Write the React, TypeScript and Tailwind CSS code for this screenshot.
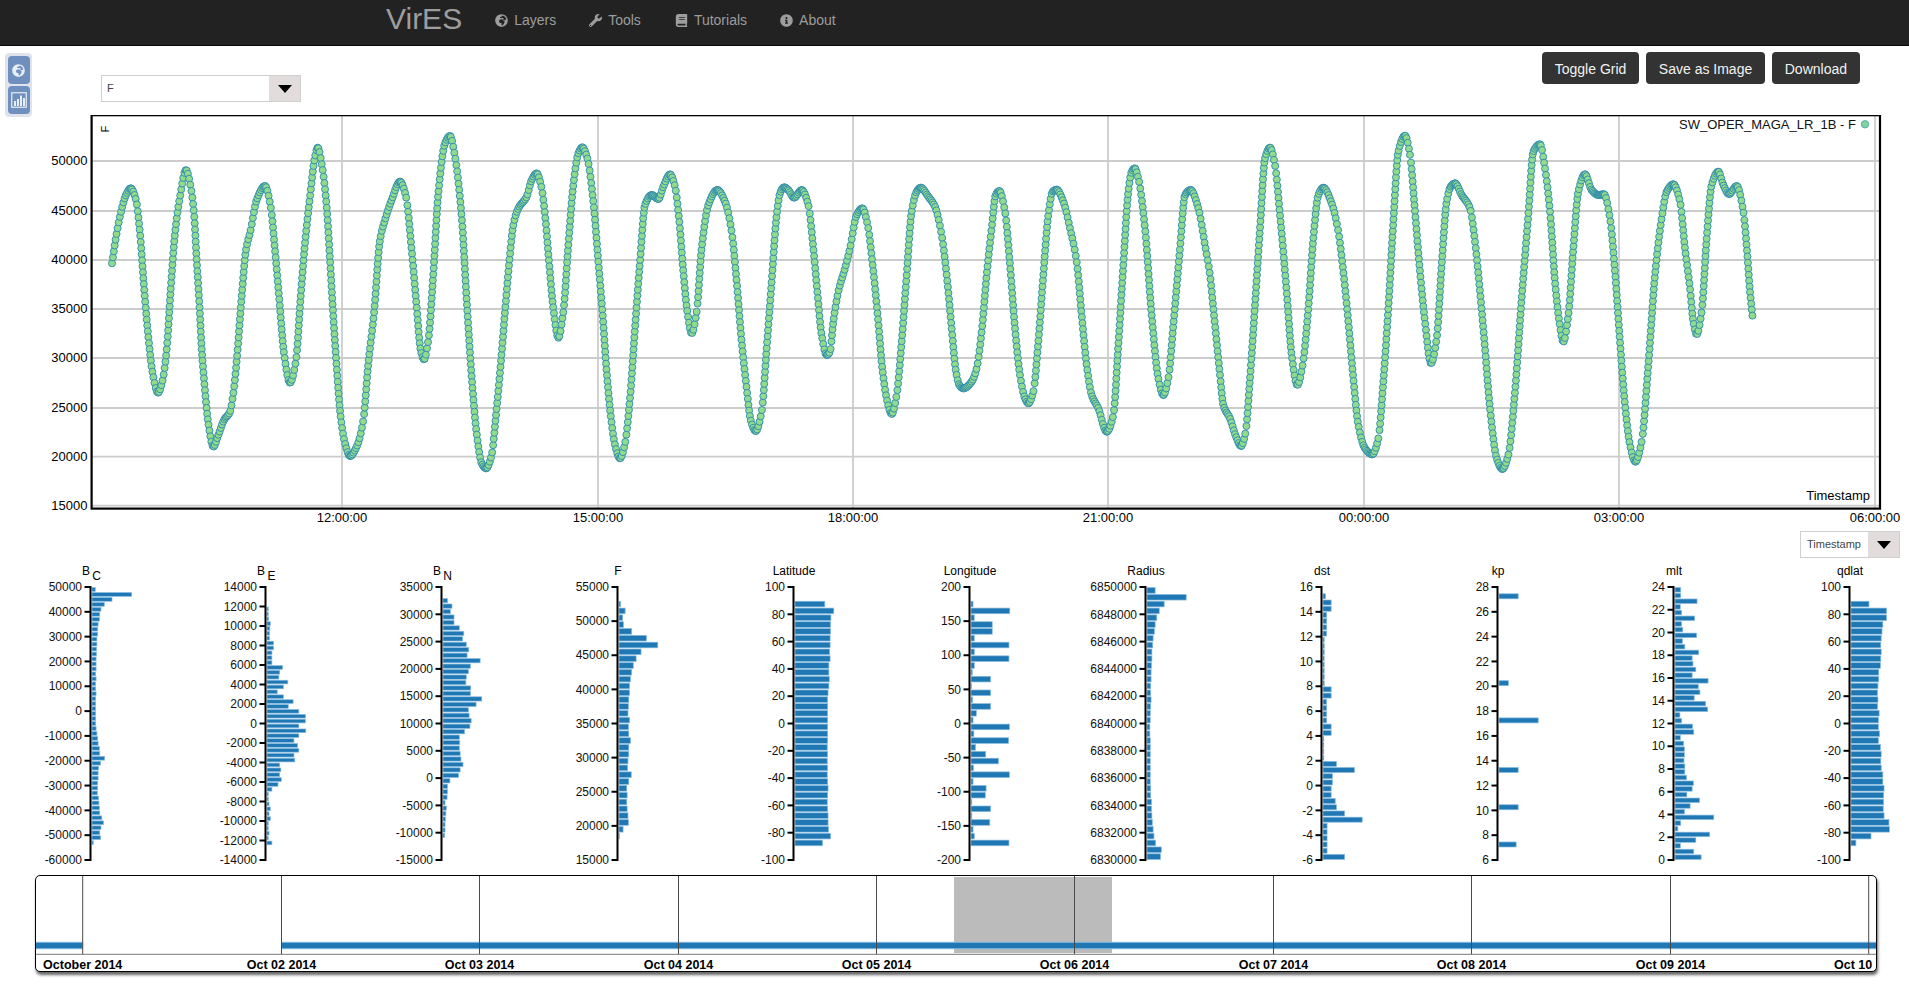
import { FaBook, FaGlobeAfrica, FaInfoCircle, FaWrench } from "react-icons/fa";

const sections: [number, number, number[]][] = [
  [0, 100, [336,490,350,400,362,340,378,285,392,265,408,300,420,400,432,560,445,710,458,820,474,878,488,840,500,750,512,570,525,400,540,290,558,210,572,260,582,340,590,480,598,610,606,760,614,860,625,970,640,1040,655,1005,672,960,690,935,700,880,712,760,725,590,738,450,752,390,770,300,795,258,812,320,825,450,838,600,852,760,870,848,888,780,902,590,915,430,930,290,945,170,953,143,968,210,980,320,990,480,1000,650,1010,800,1022,950,1035,1030,1050,1068,1070,1040,1090,960,1105,790,1122,640,1140,420,1155,360,1175,300,1200,245,1218,290,1235,450,1250,620,1262,750,1272,778,1285,720,1300,520,1315,280,1335,130,1350,108,1365,170,1385,350,1400,600,1415,830,1430,1000,1445,1090]],
  [480, 115, [18,1060,35,1020,48,900,62,750,75,590,88,440,100,330,115,280,140,245,155,195,170,175,185,220,197,320,207,440,220,580,235,668,250,590,265,390,280,210,295,115,307,97,322,130,340,260,355,440,368,600,380,770,392,900,405,990,420,1030,435,985,450,850,465,640,480,440,495,270,515,240,535,252,550,215,570,178,585,215,598,320,610,470,622,590,635,655,650,590,665,400,685,270,712,225,735,260,755,350,770,500,785,680,800,820,812,915,827,948,845,890,860,700,875,500,890,300,900,235,912,217,925,225,942,248,965,225,985,270,1000,400,1012,530,1025,660,1040,720]],
  [830, 115, [0,710,10,620,25,530,45,460,60,400,80,300,97,280,113,330,128,450,143,600,158,770,172,860,185,897,200,840,215,680,230,480,245,290,260,230,272,218,295,245,315,275,335,360,350,480,365,640,378,770,388,810,400,820,425,800,440,760,455,650,470,480,485,340,497,240,508,228,525,290,540,450,555,640,570,780,585,850,595,865,610,830,625,680,640,480,655,300,668,230,680,224,700,260,720,340,740,440,755,600,770,750,785,840,805,880,830,950,850,900,865,690,880,450,895,230,905,170,914,160,925,190,945,340,965,600,985,790,1000,840,1015,790,1030,630,1050,400,1065,240]],
  [1180, 115, [32,225,55,280,75,390,90,480,100,580,110,680,120,780,130,870,150,910,168,965,183,993,197,950,210,790,225,570,240,340,255,130,270,98,285,150,300,300,320,530,335,720,352,810,368,750,385,580,400,370,415,240,430,218,455,265,475,350,490,470,505,620,520,790,535,930,555,1000,577,1018,595,970,610,800,625,580,640,320,655,110,675,62,690,120,705,290,720,470,735,620,753,745,770,670,785,450,800,260,812,215,825,205,845,240,870,280,885,380,900,530,915,700,930,880,950,1030,967,1062,985,1020,1005,830,1025,550,1045,300,1060,110]],
  [1530, 115, [30,88,45,160,60,290,75,500,88,620,100,680,115,600,130,400,145,230,165,178,185,225,205,240,222,238,240,310,255,470,270,680,285,870,300,990,316,1040,335,980,355,750,375,480,395,310,410,230,430,208,450,260,465,400,480,520,490,620,500,658,515,590,530,370,545,210,565,170,580,210,597,237,620,213,640,290,652,420,660,530,668,608]],
];

function buildCurve(): [number, number][] {
  const xs: number[] = [];
  const ys: number[] = [];
  for (const [ox, oy, p] of sections) {
    for (let i = 0; i < p.length; i += 2) {
      xs.push(ox + p[i] / 3);
      ys.push(oy + p[i + 1] / 3);
    }
  }
  const n = xs.length;
  const d: number[] = [];
  for (let i = 0; i < n - 1; i++) d.push((ys[i + 1] - ys[i]) / (xs[i + 1] - xs[i]));
  const m: number[] = new Array(n).fill(0);
  m[0] = d[0];
  m[n - 1] = d[n - 2];
  for (let i = 1; i < n - 1; i++) {
    if (d[i - 1] * d[i] <= 0) m[i] = 0;
    else {
      const h0 = xs[i] - xs[i - 1];
      const h1 = xs[i + 1] - xs[i];
      const w1 = 2 * h1 + h0;
      const w2 = h1 + 2 * h0;
      m[i] = (w1 + w2) / (w1 / d[i - 1] + w2 / d[i]);
    }
  }
  const evaluate = (x: number, k: number) => {
    const h = xs[k + 1] - xs[k];
    const t = (x - xs[k]) / h;
    const t2 = t * t;
    const t3 = t2 * t;
    return (
      (2 * t3 - 3 * t2 + 1) * ys[k] +
      (t3 - 2 * t2 + t) * h * m[k] +
      (-2 * t3 + 3 * t2) * ys[k + 1] +
      (t3 - t2) * h * m[k + 1]
    );
  };
  const out: [number, number][] = [];
  let k = 0;
  let x = xs[0];
  while (x <= xs[n - 1]) {
    while (k < n - 2 && x > xs[k + 1]) k++;
    const y = evaluate(x, k);
    out.push([x, y]);
    const slope = Math.abs((evaluate(x + 0.1, k) - y) / 0.1);
    const arc = Math.min(6, 0.5 + 1.1 * slope);
    x += Math.max(0.3, arc / Math.sqrt(1 + slope * slope));
  }
  return out;
}

const curve = buildCurve();

const FONT = "font-['Liberation_Sans',Arial,sans-serif]";
const gridY = [161, 211, 260, 309, 358, 408, 456.7, 505.7];
const gridLabels = ["50000", "45000", "40000", "35000", "30000", "25000", "20000", "15000"];
const gridX: [number, string][] = [
  [342, "12:00:00"],
  [598, "15:00:00"],
  [853, "18:00:00"],
  [1108, "21:00:00"],
  [1364, "00:00:00"],
  [1619, "03:00:00"],
  [1875, "06:00:00"],
];

function MainChart() {
  return (
    <svg viewBox="0 115 1909 416" className="block w-[1909px] h-[416px]" fontFamily="'Liberation Sans', Arial, sans-serif">
      {gridY.map((y, i) => (
        <g key={y}>
          <line x1={92} x2={1880} y1={y} y2={y} stroke="#cccccc" strokeWidth={1.8} />
          <text x={87.5} y={y + 4.3} textAnchor="end" fontSize={13} fill="#000">
            {gridLabels[i]}
          </text>
        </g>
      ))}
      {gridX.map(([x, label]) => (
        <g key={label}>
          <line x1={x} x2={x} y1={115} y2={508} stroke="#cccccc" strokeWidth={1.8} />
          <text x={x} y={521.5} textAnchor="middle" fontSize={13} fill="#000">
            {label}
          </text>
        </g>
      ))}
      <g fill="#90db8c" stroke="#2c88b0" strokeWidth={0.9}>
        {curve.map(([x, y], i) => (
          <circle key={i} cx={x} cy={y} r={3.5} />
        ))}
      </g>
      <rect x={91.6} y={115.2} width={1788.4} height={393.4} fill="none" stroke="#000" strokeWidth={2.2} />
      <text transform="rotate(-90 109 129)" x={109} y={129} textAnchor="middle" fontSize={11} fill="#000">
        F
      </text>
      <text x={1856} y={129} textAnchor="end" fontSize={13} fill="#111">
        SW_OPER_MAGA_LR_1B - F
      </text>
      <circle cx={1865} cy={124.3} r={3.7} fill="#7fd39b" stroke="#5aaeb0" strokeWidth={1} />
      <text x={1870} y={500} textAnchor="end" fontSize={13} fill="#000">
        Timestamp
      </text>
    </svg>
  );
}

type Hist = {
  title: string;
  sub?: string;
  ticks: number[];
  bins: number;
  first: number;
  w: number[];
};

const range = (a: number, b: number, s: number) => {
  const out: number[] = [];
  for (let v = a; s > 0 ? v <= b : v >= b; v += s) out.push(v);
  return out;
};

const kp = new Array(44).fill(0);
kp[1] = 47;
kp[15] = 23;
kp[21] = 96;
kp[29] = 47;
kp[35] = 47;
kp[41] = 42;

const hists: Hist[] = [
  { title: "B", sub: "C", ticks: range(50000, -60000, -10000), bins: 55, first: 0, w: [8,97,49,30,22,19,18,15,14,14,12,12,11,11,10,10,10,9,10,9,9,10,9,9,9,9,9,9,10,12,14,15,18,19,31,21,16,15,15,14,14,13,16,17,18,19,24,28,22,19,21,3] },
  { title: "B", sub: "E", ticks: range(14000, -14000, -2000), bins: 56, first: 4, w: [3,3,4,8,7,6,6,16,16,12,12,12,38,31,29,51,40,25,40,64,52,78,94,94,78,95,78,66,75,78,66,68,31,34,31,35,27,12,3,3,5,8,5,8,3,3,5,3,12] },
  { title: "B", sub: "N", ticks: range(35000, -15000, -5000), bins: 50, first: 2, w: [11,22,18,27,27,40,51,48,57,63,59,91,67,62,57,56,68,67,95,81,62,64,69,66,53,40,41,40,42,44,49,42,38,17,11,11,10,5,8,7,6,5,5,4] },
  { title: "F", ticks: range(55000, 15000, -5000), bins: 40, first: 2, w: [4,15,9,11,31,67,95,54,42,35,31,28,26,26,24,23,22,26,23,24,28,24,24,22,21,30,24,19,20,19,20,22,23,10,1] },
  { title: "Latitude", ticks: range(100, -100, -20), bins: 40, first: 2, w: [73,95,88,87,87,86,86,85,86,83,83,84,83,81,80,80,80,80,80,80,80,79,80,79,80,79,80,81,80,79,80,81,81,82,87,67] },
  { title: "Longitude", ticks: range(200, -200, -50), bins: 40, first: 2, w: [5,95,8,52,52,8,93,8,93,8,3,48,1,48,4,48,13,5,94,7,92,11,36,67,6,94,5,37,35,2,48,2,46,5,8,93] },
  { title: "Radius", ticks: range(6850000, 6830000, -2000), bins: 40, first: 0, w: [20,96,42,30,24,20,18,15,14,12,12,11,10,10,9,9,10,9,8,8,7,7,8,8,8,8,8,8,8,9,9,11,11,12,13,15,17,21,35,33] },
  { title: "dst", ticks: range(16, -6, -2), bins: 44, first: 1, w: [6,20,20,9,9,9,9,3,3,3,3,3,3,3,3,20,20,9,9,9,9,20,20,2,2,2,2,33,77,23,23,20,20,30,33,53,96,10,10,10,10,10,53] },
  { title: "kp", ticks: range(28, 6, -2), bins: 44, first: 0, w: kp },
  { title: "mlt", ticks: range(24, 0, -2), bins: 48, first: 0, w: [14,14,54,13,16,48,16,19,53,18,24,58,42,44,51,42,81,57,61,47,75,80,12,16,43,46,13,21,23,23,22,24,24,28,45,42,29,60,37,23,95,14,7,85,51,13,46,64] },
  { title: "qdlat", ticks: range(100, -100, -20), bins: 40, first: 2, w: [44,87,87,78,76,74,73,74,73,72,68,68,66,65,66,65,69,67,67,70,67,72,74,73,74,78,78,81,80,80,79,81,93,94,49,12] },
];

const AXIS_X = 60;
const TOP = 29;
const HEIGHT = 273;

function Histogram({ h }: { h: Hist }) {
  const step = HEIGHT / h.bins;
  const n = h.ticks.length - 1;
  return (
    <svg viewBox="0 0 116 310" className="block w-[116px] h-[310px] shrink-0" fontFamily="'Liberation Sans', Arial, sans-serif">
      {h.sub ? (
        <g fontSize={12} fill="#000">
          <text x={AXIS_X - 5} y={17} textAnchor="middle">
            {h.title}
          </text>
          <text x={AXIS_X + 5.5} y={22} textAnchor="middle">
            {h.sub}
          </text>
        </g>
      ) : (
        <text x={AXIS_X} y={17} textAnchor="middle" fontSize={12} fill="#000">
          {h.title}
        </text>
      )}
      <g fill="#1f77b4" stroke="#86bbe0" strokeWidth={0.7}>
        {h.w.map((w, i) =>
          w > 0 ? (
            <rect
              key={i}
              x={AXIS_X + 1}
              y={TOP + (h.first + i) * step + 0.6}
              width={w / 2.45}
              height={step - 1.2}
            />
          ) : null
        )}
      </g>
      <line x1={AXIS_X - 0.5} x2={AXIS_X - 0.5} y1={TOP - 1} y2={TOP + HEIGHT + 1} stroke="#000" strokeWidth={2} />
      {h.ticks.map((t, i) => {
        const y = TOP + (i * HEIGHT) / n;
        return (
          <g key={t}>
            <line x1={AXIS_X - 6.5} x2={AXIS_X} y1={y} y2={y} stroke="#000" strokeWidth={2} />
            <text x={AXIS_X - 9} y={y + 4.2} textAnchor="end" fontSize={12} fill="#111">
              {t}
            </text>
          </g>
        );
      })}
    </svg>
  );
}

const tlTicks: [number, string][] = [
  [82.7, "October 2014"],
  [281.5, "Oct 02 2014"],
  [479.5, "Oct 03 2014"],
  [678.5, "Oct 04 2014"],
  [876.5, "Oct 05 2014"],
  [1074.5, "Oct 06 2014"],
  [1273.5, "Oct 07 2014"],
  [1471.5, "Oct 08 2014"],
  [1670.5, "Oct 09 2014"],
];

function Timeline() {
  return (
    <div className="ml-[35px] mt-[7px] w-[1842px] h-[97px] rounded-[5px] border border-black bg-white shadow-[1px_3px_3px_rgba(0,0,0,0.6)] overflow-hidden">
      <svg viewBox="36 876 1840 95" className="block w-full h-full" fontFamily="'Liberation Sans', Arial, sans-serif">
        <rect x={954} y={877} width={158} height={76} fill="#bbbbbb" />
        <rect x={30} y={942.3} width={52.7} height={6.4} fill="#1f77b4" stroke="#7fb7de" strokeWidth={1} />
        <rect x={281.5} y={942.3} width={1600} height={6.4} fill="#1f77b4" stroke="#7fb7de" strokeWidth={1} />
        <line x1={36} x2={1876} y1={954.3} y2={954.3} stroke="#777777" strokeWidth={1} />
        {tlTicks.map(([x, label]) => (
          <g key={label}>
            <line x1={x} x2={x} y1={876} y2={954} stroke="#4a4a4a" strokeWidth={1} />
            <text x={x} y={969} textAnchor="middle" fontSize={12.5} fontWeight={700} fill="#000">
              {label}
            </text>
          </g>
        ))}
        <line x1={1868.7} x2={1868.7} y1={876} y2={954} stroke="#4a4a4a" strokeWidth={1} />
        <text x={1834} y={969} fontSize={12.5} fontWeight={700} fill="#000">
          Oct 10
        </text>
      </svg>
    </div>
  );
}

function Select({ label, textClass, widthClass, heightClass, arrowClass }: { label: string; textClass: string; widthClass: string; heightClass: string; arrowClass: string }) {
  return (
    <div className={`flex border border-[#cfcfcf] bg-white ${widthClass} ${heightClass}`}>
      <div className={`flex-1 flex items-center text-[#444] ${textClass}`}>{label}</div>
      <div className={`flex items-center justify-center bg-[#e2dcdc] ${arrowClass}`}>
        <div className="w-0 h-0 border-x-[7px] border-t-[8px] border-x-transparent border-t-black" />
      </div>
    </div>
  );
}

function NavItem({ icon, label, className }: { icon: React.ReactNode; label: string; className: string }) {
  return (
    <div className={`flex items-center gap-[6px] text-[14px] text-[#9d9d9d] ${className}`}>
      <span className="w-[13px] flex justify-center">{icon}</span>
      <span>{label}</span>
    </div>
  );
}

function SideButton({ children }: { children: React.ReactNode }) {
  return (
    <div className="w-[22px] h-[28px] rounded-[4px] bg-[#6f8fbe] flex items-center justify-center text-[#e9eef6]">
      {children}
    </div>
  );
}

export default function App() {
  return (
    <div className={`relative w-[1909px] h-[984px] overflow-hidden bg-white ${FONT}`}>
      <header className="h-[46px] bg-[#222222] border-b border-[#080808] flex items-center pl-[386px] pb-[5px]">
        <span className="text-[30px] leading-none text-[#9d9d9d] mr-[33px] mb-[2px]">VirES</span>
        <NavItem icon={<FaGlobeAfrica size={13} />} label="Layers" className="mr-[33px]" />
        <NavItem icon={<FaWrench size={13} />} label="Tools" className="mr-[34px]" />
        <NavItem icon={<FaBook size={13} />} label="Tutorials" className="mr-[33px]" />
        <NavItem icon={<FaInfoCircle size={13} />} label="About" className="" />
      </header>

      <div className="absolute left-[5px] top-[53px] w-[27px] h-[64px] rounded-[4px] bg-[#dfe3ec] flex flex-col items-center gap-[2px] pt-[3px]">
        <SideButton>
          <FaGlobeAfrica size={13} />
        </SideButton>
        <SideButton>
          <svg width="16" height="16" viewBox="0 0 16 16" fill="none">
            <rect x="0.75" y="0.75" width="14.5" height="14.5" stroke="currentColor" strokeWidth="1.2" />
            <rect x="3" y="9" width="2" height="5" fill="currentColor" />
            <rect x="6" y="7" width="2" height="7" fill="currentColor" />
            <rect x="9" y="3.5" width="2" height="10.5" fill="currentColor" />
            <rect x="12" y="6" width="2" height="8" fill="currentColor" />
          </svg>
        </SideButton>
      </div>

      <div className="h-[69px] flex justify-between items-start pl-[101px] pr-[49px]">
        <div className="mt-[29px]">
          <Select label="F" textClass="text-[11px] pl-[5px]" widthClass="w-[200px]" heightClass="h-[27px]" arrowClass="w-[31px]" />
        </div>
        <div className="mt-[6px] flex gap-[6.5px]">
          {["Toggle Grid", "Save as Image", "Download"].map((b) => (
            <div key={b} className="h-[32px] px-[13px] pt-[2px] rounded-[4px] bg-[#333333] text-[14px] text-[#f2f2f2] flex items-center">
              {b}
            </div>
          ))}
        </div>
      </div>

      <MainChart />

      <div className="h-[27px] flex justify-end pr-[9px]">
        <Select label="Timestamp" textClass="text-[11px] pl-[6px]" widthClass="w-[100px]" heightClass="h-[27px]" arrowClass="w-[31px]" />
      </div>

      <div className="flex gap-[59.9px] pl-[30.6px]">
        {hists.map((h) => (
          <Histogram key={h.title + (h.sub ?? "")} h={h} />
        ))}
      </div>

      <Timeline />
    </div>
  );
}
